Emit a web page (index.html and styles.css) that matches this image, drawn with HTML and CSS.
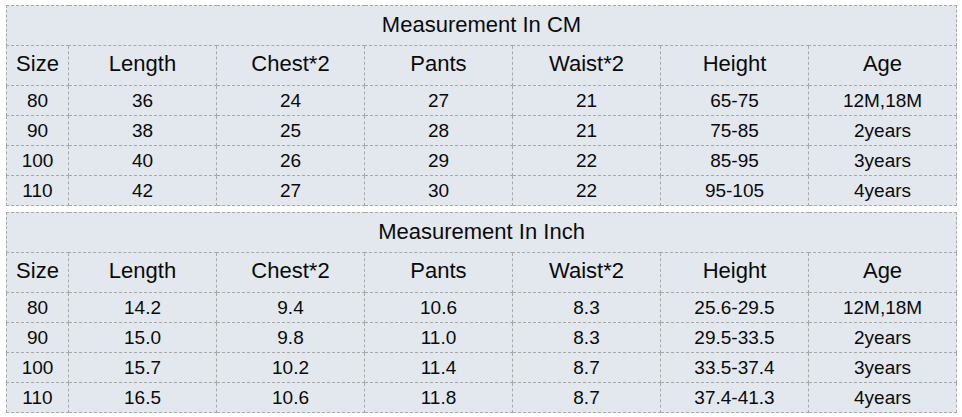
FILE: index.html
```html
<!DOCTYPE html>
<html>
<head>
<meta charset="utf-8">
<link rel="stylesheet" href="styles.css">
</head>
<body>
<div class="page">
  <table class="size-table">
    <colgroup>
      <col class="c-size"><col class="c"><col class="c"><col class="c"><col class="c"><col class="c"><col class="c">
    </colgroup>
    <tr class="title"><td colspan="7">Measurement In CM</td></tr>
    <tr class="head"><td>Size</td><td>Length</td><td>Chest*2</td><td>Pants</td><td>Waist*2</td><td>Height</td><td>Age</td></tr>
    <tr class="row"><td>80</td><td>36</td><td>24</td><td>27</td><td>21</td><td>65-75</td><td>12M,18M</td></tr>
    <tr class="row"><td>90</td><td>38</td><td>25</td><td>28</td><td>21</td><td>75-85</td><td>2years</td></tr>
    <tr class="row"><td>100</td><td>40</td><td>26</td><td>29</td><td>22</td><td>85-95</td><td>3years</td></tr>
    <tr class="row"><td>110</td><td>42</td><td>27</td><td>30</td><td>22</td><td>95-105</td><td>4years</td></tr>
  </table>
  <table class="size-table">
    <colgroup>
      <col class="c-size"><col class="c"><col class="c"><col class="c"><col class="c"><col class="c"><col class="c">
    </colgroup>
    <tr class="title"><td colspan="7">Measurement In Inch</td></tr>
    <tr class="head"><td>Size</td><td>Length</td><td>Chest*2</td><td>Pants</td><td>Waist*2</td><td>Height</td><td>Age</td></tr>
    <tr class="row"><td>80</td><td>14.2</td><td>9.4</td><td>10.6</td><td>8.3</td><td>25.6-29.5</td><td>12M,18M</td></tr>
    <tr class="row"><td>90</td><td>15.0</td><td>9.8</td><td>11.0</td><td>8.3</td><td>29.5-33.5</td><td>2years</td></tr>
    <tr class="row"><td>100</td><td>15.7</td><td>10.2</td><td>11.4</td><td>8.7</td><td>33.5-37.4</td><td>3years</td></tr>
    <tr class="row"><td>110</td><td>16.5</td><td>10.6</td><td>11.8</td><td>8.7</td><td>37.4-41.3</td><td>4years</td></tr>
  </table>
</div>
</body>
</html>
```
FILE: styles.css
```css
html, body {
  margin: 0;
  padding: 0;
  background: #ffffff;
}
.page {
  padding: 5px 6px;
  display: flex;
  flex-direction: column;
  gap: 6px;
  font-family: "Liberation Sans", Arial, sans-serif;
  color: #0a0a0a;
}
.size-table {
  width: 951px;
  table-layout: fixed;
  border-collapse: collapse;
  background: #e3e8ef;
}
.size-table td {
  border: 1px dashed #a8a8a8;
  text-align: center;
  padding: 0;
  white-space: nowrap;
}
.c-size { width: 62px; }
.c { width: 148px; }
.title td {
  height: 38px;
  font-size: 22px;
  padding-bottom: 1px;
}
.head td {
  height: 36px;
  font-size: 22px;
  padding-bottom: 3px;
}
.row td {
  height: 29px;
  font-size: 19px;
}
```
